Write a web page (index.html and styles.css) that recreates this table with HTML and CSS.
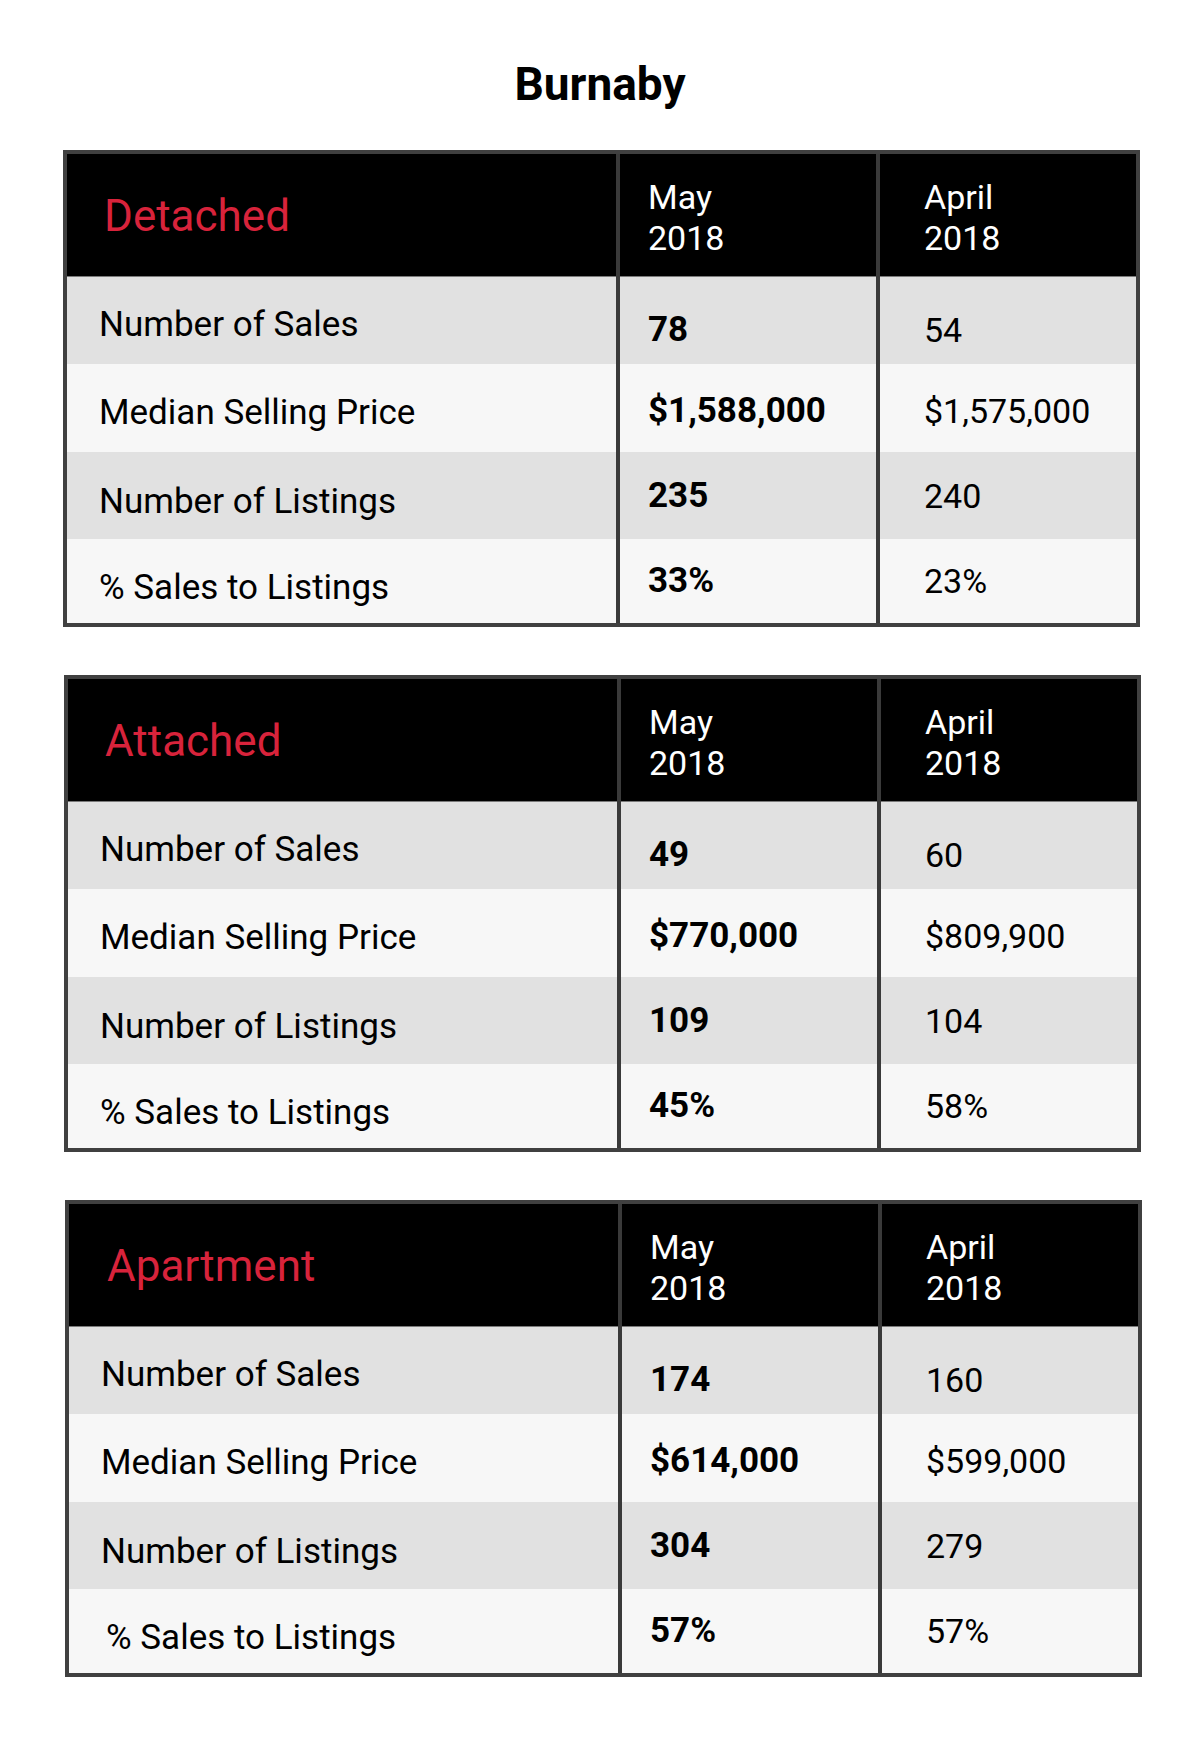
FILE: index.html
```html
<!DOCTYPE html>
<html lang="en">
<head>
<meta charset="utf-8">
<title>Burnaby</title>
<link rel="stylesheet" href="styles.css">
</head>
<body>
<main class="page">
  <h1 class="title">Burnaby</h1>

  <section class="stat-table t1">
    <div class="cell head-title">Detached</div>
    <div class="cell head-date col-may">May<br>2018</div>
    <div class="cell head-date col-apr">April<br>2018</div>

    <div class="cell label r1">Number of Sales</div>
    <div class="cell value strong r1 col-may">78</div>
    <div class="cell value r1 col-apr">54</div>

    <div class="cell label r2">Median Selling Price</div>
    <div class="cell value strong r2 col-may">$1,588,000</div>
    <div class="cell value r2 col-apr">$1,575,000</div>

    <div class="cell label r3">Number of Listings</div>
    <div class="cell value strong r3 col-may">235</div>
    <div class="cell value r3 col-apr">240</div>

    <div class="cell label r4">% Sales to Listings</div>
    <div class="cell value strong r4 col-may">33%</div>
    <div class="cell value r4 col-apr">23%</div>
  </section>

  <section class="stat-table t2">
    <div class="cell head-title">Attached</div>
    <div class="cell head-date col-may">May<br>2018</div>
    <div class="cell head-date col-apr">April<br>2018</div>

    <div class="cell label r1">Number of Sales</div>
    <div class="cell value strong r1 col-may">49</div>
    <div class="cell value r1 col-apr">60</div>

    <div class="cell label r2">Median Selling Price</div>
    <div class="cell value strong r2 col-may">$770,000</div>
    <div class="cell value r2 col-apr">$809,900</div>

    <div class="cell label r3">Number of Listings</div>
    <div class="cell value strong r3 col-may">109</div>
    <div class="cell value r3 col-apr">104</div>

    <div class="cell label r4">% Sales to Listings</div>
    <div class="cell value strong r4 col-may">45%</div>
    <div class="cell value r4 col-apr">58%</div>
  </section>

  <section class="stat-table t3">
    <div class="cell head-title">Apartment</div>
    <div class="cell head-date col-may">May<br>2018</div>
    <div class="cell head-date col-apr">April<br>2018</div>

    <div class="cell label r1">Number of Sales</div>
    <div class="cell value strong r1 col-may">174</div>
    <div class="cell value r1 col-apr">160</div>

    <div class="cell label r2">Median Selling Price</div>
    <div class="cell value strong r2 col-may">$614,000</div>
    <div class="cell value r2 col-apr">$599,000</div>

    <div class="cell label r3">Number of Listings</div>
    <div class="cell value strong r3 col-may">304</div>
    <div class="cell value r3 col-apr">279</div>

    <div class="cell label r4 indent">% Sales to Listings</div>
    <div class="cell value strong r4 col-may">57%</div>
    <div class="cell value r4 col-apr">57%</div>
  </section>
</main>
</body>
</html>
```

FILE: styles.css
```css
* {
  box-sizing: border-box;
}

html, body {
  margin: 0;
  padding: 0;
  background: #ffffff;
}

body {
  font-family: Roboto, "Liberation Sans", Arial, sans-serif;
  color: #000000;
}

.page {
  padding-top: 58px;
  padding-bottom: 40px;
}

.title {
  margin: 0 0 39px 0;
  font-size: 46px;
  line-height: 53px;
  font-weight: 700;
  text-align: center;
  color: #000000;
}

.stat-table {
  display: grid;
  grid-template-columns: 549px 256px 256px;
  grid-template-rows: 123px 87px 88px 87px 84px;
  column-gap: 4px;
  row-gap: 0;
  width: 1077px;
  margin-left: 63px;
  margin-bottom: 48px;
  border: 4px solid #404040;
  background: #3a3a3a;
}

.stat-table.t2 {
  margin-left: 64px;
}

.stat-table.t3 {
  margin-left: 65px;
  margin-bottom: 0;
}

.cell {
  margin: 0;
}

.head-title,
.head-date {
  background: #000000;
  color: #ffffff;
  border-bottom: 1px solid #7a7a7a;
}

.head-title {
  display: flex;
  align-items: center;
  padding-left: 37px;
  padding-top: 2px;
  font-size: 44px;
  line-height: 52px;
  color: #d8233b;
}

.t3 .head-title {
  padding-left: 38px;
}

.head-date {
  padding-top: 23px;
  font-size: 34px;
  line-height: 41px;
}

.col-may {
  padding-left: 28px;
}

.col-apr {
  padding-left: 44px;
}

.r1, .r3 {
  background: #e1e1e1;
}

.r2, .r4 {
  background: #f7f7f7;
}

.label {
  padding-left: 32px;
  font-size: 35px;
  line-height: 40px;
  color: #000000;
}

.label.indent {
  padding-left: 37px;
}

.label.r1 { padding-top: 28px; }
.label.r2 { padding-top: 29px; }
.label.r3 { padding-top: 30px; }
.label.r4 { padding-top: 29px; }

.value {
  font-size: 34px;
  line-height: 40px;
  color: #000000;
}

.value.strong {
  font-weight: 700;
  font-size: 35px;
}

.value.r1 { padding-top: 32.5px; }
.value.r2 { padding-top: 26.5px; }
.value.r3 { padding-top: 23.5px; }
.value.r4 { padding-top: 21.5px; }
```
